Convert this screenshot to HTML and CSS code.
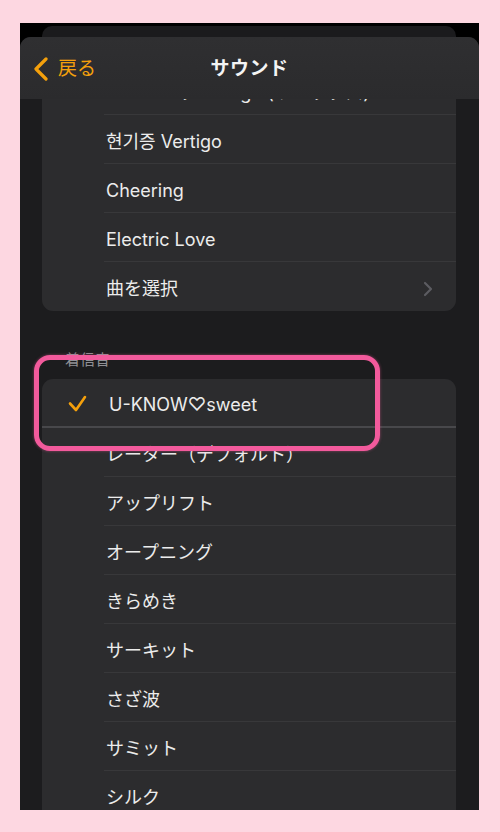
FILE: index.html
```html
<!DOCTYPE html>
<html lang="ja">
<head>
<meta charset="utf-8">
<title>サウンド</title>
<link rel="stylesheet" href="styles.css">
</head>
<body>
<div class="phone">
  <div class="backcard"></div>
  <div class="sheet">
    <header class="nav">
      <div class="back">
        <svg class="back-chevron" width="14" height="24" viewBox="0 0 14 24" aria-hidden="true">
          <polyline points="12,2 2,12 12,22" fill="none" stroke="#f4a00c" stroke-width="3.2" stroke-linecap="round" stroke-linejoin="round"/>
        </svg>
        <span class="back-label">戻る</span>
      </div>
      <h1 class="title">サウンド</h1>
      <div class="nav-spacer"></div>
    </header>

    <main class="content">
      <section class="card">
        <div class="row"><div class="row-body"><span class="label">ニューエラ Vertigo (リミックス)</span></div></div>
        <div class="row"><div class="row-body"><span class="label">현기증 Vertigo</span></div></div>
        <div class="row"><div class="row-body"><span class="label">Cheering</span></div></div>
        <div class="row"><div class="row-body"><span class="label">Electric Love</span></div></div>
        <div class="row"><div class="row-body last">
          <span class="label">曲を選択</span>
          <svg class="disclosure" width="10" height="16" viewBox="0 0 10 16" aria-hidden="true">
            <polyline points="2,2 8,8 2,14" fill="none" stroke="#5c5c61" stroke-width="2.2" stroke-linecap="round" stroke-linejoin="round"/>
          </svg>
        </div></div>
      </section>

      <h2 class="section-header">着信音</h2>

      <section class="card">
        <div class="row selected">
          <div class="lead">
            <svg class="check" width="20" height="18" viewBox="0 0 20 18" aria-hidden="true">
              <polyline points="2,8.5 8,15 17,2" fill="none" stroke="#f4a00c" stroke-width="2.6" stroke-linecap="round" stroke-linejoin="round"/>
            </svg>
          </div>
          <div class="row-body full"><span class="label shifted">U-KNOW♡sweet</span></div>
        </div>
        <div class="row"><div class="row-body"><span class="label">レーター（デフォルト）</span></div></div>
        <div class="row"><div class="row-body"><span class="label">アップリフト</span></div></div>
        <div class="row"><div class="row-body"><span class="label">オープニング</span></div></div>
        <div class="row"><div class="row-body"><span class="label">きらめき</span></div></div>
        <div class="row"><div class="row-body"><span class="label">サーキット</span></div></div>
        <div class="row"><div class="row-body"><span class="label">さざ波</span></div></div>
        <div class="row"><div class="row-body"><span class="label">サミット</span></div></div>
        <div class="row"><div class="row-body"><span class="label">シルク</span></div></div>
      </section>
    </main>
  </div>
  <div class="highlight"></div>
</div>
</body>
</html>
```

FILE: styles.css
```css
* {
  box-sizing: border-box;
}

html, body {
  margin: 0;
  padding: 0;
}

body {
  width: 500px;
  height: 832px;
  background: #fdd7e1;
  font-family: "Inter", "Noto Sans CJK JP", "Noto Sans CJK KR", sans-serif;
  overflow: hidden;
}

.phone {
  position: relative;
  margin: 23px 0 0 20px;
  width: 459px;
  height: 787px;
  background: #000;
  overflow: hidden;
}

.backcard {
  margin: 3px 23px 0 22px;
  height: 11px;
  background: #1b1b1d;
  border-radius: 10px 10px 0 0;
}

.sheet {
  position: relative;
  height: 773px;
  background: #1c1c1e;
  border-radius: 11px 11px 0 0;
  overflow: hidden;
}

.nav {
  position: absolute;
  top: 0;
  left: 0;
  right: 0;
  z-index: 2;
  height: 62px;
  display: grid;
  grid-template-columns: 1fr auto 1fr;
  align-items: center;
  padding: 0 14px;
  background: linear-gradient(#2f2f31, #2b2b2d);
}

.back {
  display: flex;
  align-items: center;
  gap: 10px;
  padding-top: 1px;
}

.back-label {
  color: #f4a00c;
  font-size: 19px;
  line-height: 1;
}

.title {
  margin: 0;
  color: #f4f4f4;
  font-size: 19px;
  font-weight: 700;
  line-height: 1;
  letter-spacing: 0.5px;
}

.content {
  padding: 29px 23px 0 22px;
}

.card {
  background: #2c2c2e;
  border-radius: 11px;
  overflow: hidden;
}

.row {
  display: flex;
  height: 49px;
}

.row-body {
  flex: 1;
  margin-left: 62px;
  display: flex;
  align-items: center;
  justify-content: space-between;
  padding-top: 5px;
  padding-right: 23px;
  border-bottom: 1px solid #38383a;
}

.row-body.last {
  border-bottom: none;
}

.row:last-child .row-body {
  border-bottom: none;
}

.label {
  color: #ececec;
  font-size: 18px;
  line-height: 1;
  padding-left: 2px;
}

.label.shifted {
  padding-left: 5px;
}

.lead {
  width: 62px;
  flex: 0 0 62px;
  display: flex;
  align-items: center;
  padding-top: 3px;
  padding-left: 26px;
  border-bottom: 2px solid #48484b;
}

.row.selected .row-body {
  margin-left: 0;
  border-bottom: 2px solid #48484b;
}

.section-header {
  margin: 40px 0 10px 23px;
  color: #8f8f94;
  font-size: 15px;
  font-weight: 400;
  line-height: 18px;
}

.highlight {
  position: absolute;
  left: 14px;
  top: 332px;
  width: 346px;
  height: 96px;
  border: 5px solid #f25a9c;
  border-radius: 16px;
  box-shadow: 0 0 3px rgba(242, 90, 156, 0.5);
  pointer-events: none;
}
```
